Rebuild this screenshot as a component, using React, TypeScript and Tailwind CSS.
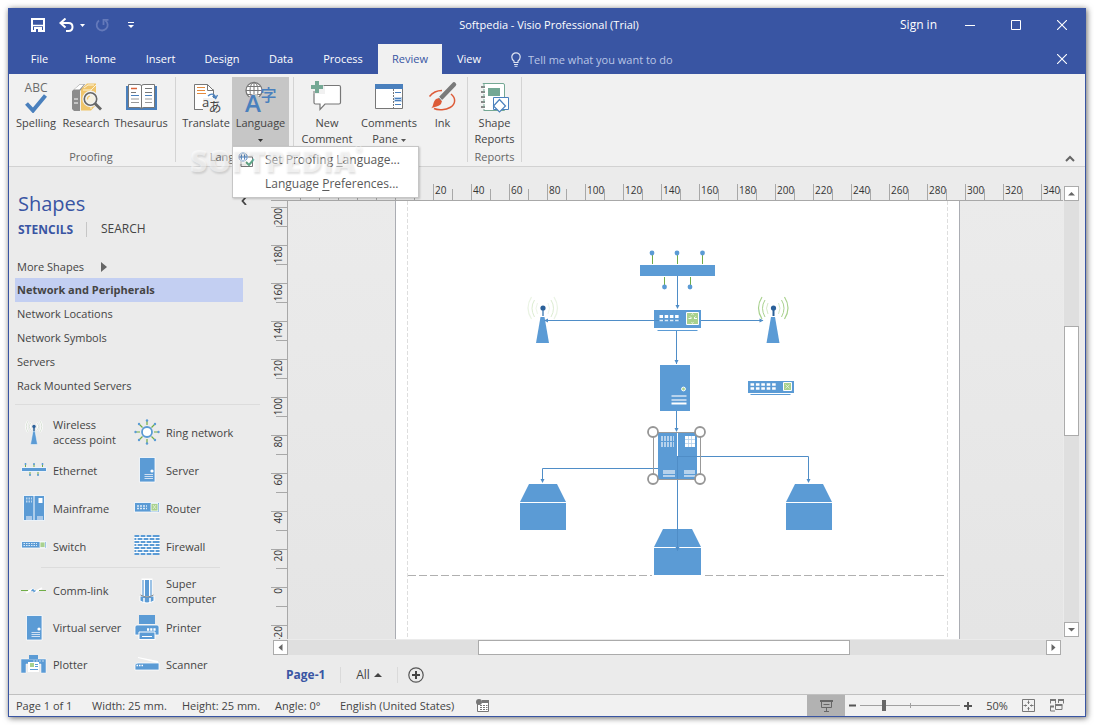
import type { ReactNode } from "react";

const BLUE = "#5b9bd5";
const GREEN = "#a9d18e";

type ArtProps = { view: string; w: number; h: number; children: ReactNode; className?: string };

function Art({ view, w, h, children, className = "" }: ArtProps) {
  return (
    <svg viewBox={view} width={w} height={h} fill="none" aria-hidden="true" className={`shrink-0 ${className}`}>
      {children}
    </svg>
  );
}

/* ---------- Title bar and tabs ---------- */

function TitleBar() {
  return (
    <div className="relative flex h-[36px] items-center pb-[2px] text-white">
      <div className="flex flex-1 items-center pl-[23px]">
        <button aria-label="Save" className="mr-[14px]">
          <Art view="0 0 14 14" w={14} h={14}>
            <path d="M1 1H13V13H1Z" stroke="#fff" strokeWidth="2" />
            <path d="M1 7.500H13" stroke="#fff" strokeWidth="1.500" />
            <path d="M3 9H11V14H3Z" fill="#fff" />
            <path d="M5 11H7V14H5Z" fill="#3955a3" />
          </Art>
        </button>
        <button aria-label="Undo">
          <Art view="0 0 15 14" w={15} h={14}>
            <path d="M2 5H9.500C12 5 13.500 6.800 13.500 9S12 13 9.500 13H7" stroke="#fff" strokeWidth="2" />
            <path d="M6.500 0.500L1.500 5L6.500 9.500" stroke="#fff" strokeWidth="2" />
          </Art>
        </button>
        <button aria-label="Undo history" className="ml-[6px] mr-[10px]">
          <Art view="0 0 5 3" w={5} h={3}><path d="M0 0H5L2.500 3Z" fill="#fff" /></Art>
        </button>
        <button aria-label="Repeat" disabled>
          <Art view="0 0 14 14" w={14} h={14}>
            <path d="M4 2.500A5.500 5.500 0 1 0 10.500 2.600M8.500 7V1.800H13.500" stroke="#6479ba" strokeWidth="1.800" />
          </Art>
        </button>
        <button aria-label="Customize Quick Access Toolbar" className="ml-[19px]">
          <Art view="0 0 6 6" w={6} h={6}>
            <path d="M0 .5H6" stroke="#fff" />
            <path d="M0 3H6L3 6Z" fill="#fff" />
          </Art>
        </button>
      </div>
      <h1>Softpedia - Visio Professional (Trial)</h1>
      <div className="flex flex-1 items-center justify-end pr-[19px]">
        <button className="mr-[28px] text-[12px]">Sign in</button>
        <button aria-label="Minimize" className="mr-[36px]"><Art view="0 0 10 10" w={10} h={10}><path d="M0 5.500H10" stroke="#fff" /></Art></button>
        <button aria-label="Maximize" className="mr-[36px]"><Art view="0 0 10 10" w={10} h={10}><path d="M.5 .5H9.500V9.500H.5Z" stroke="#fff" /></Art></button>
        <button aria-label="Close"><CloseGlyph /></button>
      </div>
    </div>
  );
}

function CloseGlyph() {
  return <Art view="0 0 10 10" w={10} h={10}><path d="M0 0L10 10M10 0L0 10" stroke="#fff" strokeWidth="1.100" /></Art>;
}

function Tabs() {
  const tab = "flex h-full items-center justify-center text-white";
  return (
    <nav className="flex h-[30px] items-center pl-px">
      <button className={`${tab} w-[61px]`}>File</button>
      <button className={`${tab} w-[61px]`}>Home</button>
      <button className={`${tab} w-[59px]`}>Insert</button>
      <button className={`${tab} w-[64px]`}>Design</button>
      <button className={`${tab} w-[54px]`}>Data</button>
      <button className={`${tab} w-[70px]`}>Process</button>
      <button className="flex h-full w-[64px] items-center justify-center bg-[#f1f1f1] text-[#3955a3]">Review</button>
      <button className={`${tab} w-[54px]`}>View</button>
      <label className="ml-[15px] flex h-full flex-1 items-center gap-[7px]">
        <Art view="0 0 10 15" w={10} h={15}>
          <path d="M3 10.500V9C1.500 8 .8 6.600 .8 5A4.200 4.200 0 0 1 9.200 5C9.200 6.600 8.500 8 7 9V10.500Z" stroke="#dfe4f2" strokeWidth="1.200" />
          <path d="M3 12.500H7M3.500 14.300H6.500" stroke="#dfe4f2" />
        </Art>
        <input aria-label="Tell me" className="h-[20px] w-[200px] bg-transparent outline-none placeholder:text-[#b9c5e6]" placeholder="Tell me what you want to do" />
      </label>
      <button aria-label="Close document" className="mr-[19px]"><CloseGlyph /></button>
    </nav>
  );
}

/* ---------- Ribbon ---------- */

function SpellingIcon() {
  return (
    <span className="flex h-[32px] flex-col items-center">
      <span className="h-[13px] text-[12px] leading-[13px] font-medium text-[#6b6b6b]">ABC</span>
      <Art view="0 0 22 19" w={22} h={19}><path d="M1.500 9.500L8 16.500L20.500 1.500" stroke="#4a80bd" strokeWidth="4" /></Art>
    </span>
  );
}

function ResearchIcon() {
  return (
    <Art view="70 80 32 32" w={32} h={32}>
      <path d="M81 88L87 82.500H96V104L91 109.500H81Z" fill="#f0c56b" />
      <path d="M83 89H91V108M91 89L96 84M84 87L88 84H94" stroke="#fdf3d8" />
      <path d="M72 90L80 83H85L80 90V110H74L72 108Z" fill="#8c8c8c" />
      <path d="M74 88.500L80 83.500H84L79.500 88.500Z" fill="#fff" />
      <path d="M74 98H78M74 102H78" stroke="#fff" />
      <circle cx="90.500" cy="98" r="6.200" fill="#f4f0e2" stroke="#f1f1f1" strokeWidth="4" />
      <circle cx="90.500" cy="98" r="6.200" stroke="#666" strokeWidth="1.600" />
      <path d="M95 102.500L101 108.500" stroke="#666" strokeWidth="2.800" />
      <path d="M87.500 98.500A3.200 3.200 0 0 1 90 95" stroke="#f0c56b" strokeWidth="1.200" />
    </Art>
  );
}

function ThesaurusIcon() {
  return (
    <Art view="124 80 33 32" w={33} h={32}>
      <path d="M125 85H156V109H125Z" fill="#4a80bd" />
      <path d="M127.500 83.500H138Q140.500 83.500 140.500 85Q140.500 83.500 143 83.500H153.500V106.500H143Q140.500 106.500 140.500 108Q140.500 106.500 138 106.500H127.500Z" fill="#fff" stroke="#777" />
      <path d="M140.500 85V107" stroke="#777" />
      <path d="M130 87.500H136" stroke="#d9633b" strokeWidth="1.500" />
      <path d="M130 91.500H135M144 87.500H151M144 91.500H151" stroke="#777" />
      <path d="M130 94.500H138M144 94.500H151" stroke="#4a80bd" />
      <path d="M130 98H138M130 101.500H138M144 98H151M144 101.500H151" stroke="#999" />
    </Art>
  );
}

function TranslateIcon() {
  return (
    <Art view="190 80 32 32" w={32} h={32} className="overflow-visible">
      <path d="M194.500 83.500H207.500L213.500 89.500V108.500H194.500Z" fill="#fff" stroke="#777" />
      <path d="M207.500 83.500V89.500H213.500" stroke="#777" />
      <path d="M197 86.500H205M197 89.500H205M197 92.500H206" stroke="#e58a3c" strokeWidth="1.200" />
      <path d="M203 97H222V112H203Z" fill="#f1f1f1" />
      <path d="M213.500 88.500V93M194.500 108.500H202" stroke="#777" />
      <path d="M208 95C211 92 214.500 92.500 215.500 96.500M212.500 95L215.700 97.500L217.500 94" stroke="#4a80bd" strokeWidth="1.300" />
      <text x="202" y="106" fontSize="13" fontFamily="Open Sans" fill="#444">a</text>
      <text x="208.500" y="110" fontSize="13" fontFamily="Noto Sans CJK JP" fill="#444">あ</text>
    </Art>
  );
}

function LanguageIcon() {
  return (
    <Art view="244 80 32 32" w={32} h={32} className="overflow-visible">
      <circle cx="253" cy="89.500" r="8" fill="#fff" stroke="#777" strokeWidth="1.300" />
      <ellipse cx="253" cy="89.500" rx="4" ry="8" stroke="#777" />
      <path d="M253 81.500V97.500M245 89.500H261M246.500 85.500H259.500M246.500 93.500H259.500" stroke="#777" />
      <path d="M246 99L251 93H256L260 99Z" fill="#c6c6c6" />
      <text x="244" y="111" fontSize="24" fontWeight="600" fontFamily="Open Sans" fill="#4a80bd">A</text>
      <text x="259.500" y="99.500" fontSize="16" fontFamily="Noto Sans CJK JP" fontWeight="500" fill="#4a80bd">字</text>
    </Art>
  );
}

function NewCommentIcon() {
  return (
    <Art view="311 80 32 32" w={32} h={32}>
      <path d="M315.500 84.500H339Q340.500 84.500 340.500 86V101.500Q340.500 103 339 103H325L320 108.500V103H315.500Q314 103 314 101.500V86Q314 84.500 315.500 84.500Z" fill="#fff" stroke="#777" strokeWidth="1.200" />
      <path d="M310 79H325V93H310Z" fill="#f1f1f1" />
      <path d="M314 93V90M323.500 84.500H327" stroke="#777" />
      <path d="M315 80H319V84H323V88H319V92H315V88H311V84H315Z" fill="#74a894" />
    </Art>
  );
}

function CommentsPaneIcon() {
  return (
    <Art view="373 80 32 32" w={32} h={32}>
      <path d="M375.500 83.500H402.500V107.500H375.500Z" fill="#fff" stroke="#777" />
      <path d="M375 83H403V88H375Z" fill="#4a80bd" />
      <path d="M393.500 88V107" stroke="#777" strokeDasharray="2 1" />
      <path d="M394 96H402V101H394Z" fill="#bcd3ec" />
      <path d="M395 91.500H401M395 97.500H401M395 99.500H401M395 103.500H401" stroke="#4a80bd" />
    </Art>
  );
}

function InkIcon() {
  return (
    <Art view="427 80 32 32" w={32} h={32}>
      <path d="M429.500 95.500C433 91 438 89.500 442 89.500M451 93C456 97 456 103 450 106.500C446 109 438 109.500 434 107.500" stroke="#dd5b38" strokeWidth="1.500" />
      <path d="M431 107.500C434 105 432.500 101 436 98L439 97L442 100L441 103C438 106 434 105.500 431 107.500Z" fill="#dd5b38" />
      <path d="M441 97L454 83.500" stroke="#7a7a7a" strokeWidth="4.500" strokeLinecap="round" />
      <path d="M437.500 94.500L443 100.500" stroke="#f1f1f1" />
    </Art>
  );
}

function ShapeReportsIcon() {
  return (
    <Art view="478 80 32 32" w={32} h={32}>
      <path d="M482 82.500H502Q503.500 82.500 503.500 84V109.500H482Z" fill="#fff" stroke="#74a894" />
      <path d="M482 83V110" stroke="#f1f1f1" strokeWidth="2" />
      <path d="M480 86H484M480 91H484M480 96H484M480 101H484M480 106H484" stroke="#888" strokeWidth="2" />
      <path d="M483 83V110" stroke="#74a894" strokeDasharray="3 2" />
      <path d="M487 87H499V95H487Z" fill="#74a894" />
      <path d="M492.500 96.500H507.500V108.500H492.500Z" fill="#fff" stroke="#4a80bd" />
      <path d="M498.500 98.500L504.500 105L498.500 111L492.500 105Z" fill="#fff" stroke="#4a80bd" strokeWidth="1.200" />
    </Art>
  );
}

type RibbonButtonProps = { icon: ReactNode; label: ReactNode; className: string };

function RibbonButton({ icon, label, className }: RibbonButtonProps) {
  return (
    <button className={`flex h-[69px] flex-col items-center pt-[4px] leading-[16px] whitespace-nowrap ${className}`}>
      {icon}
      <span className="mt-[2px] text-center">{label}</span>
    </button>
  );
}

function RibbonGroup({ title, children, className = "" }: { title: string; children: ReactNode; className?: string }) {
  return (
    <section className={`flex h-[85px] flex-col border-r border-[#d4d4d4] ${className}`}>
      <div className="flex">{children}</div>
      <h2 className="mt-[3px] text-center text-[#666] leading-[16px]">{title}</h2>
    </section>
  );
}

function Caret({ color = "#555" }: { color?: string }) {
  return <Art view="0 0 5 3" w={5} h={3} className="inline-block align-middle"><path d="M0 0H5L2.500 3Z" fill={color} /></Art>;
}

function LanguageMenu() {
  return (
    <div role="menu" className="absolute top-[69px] left-0 z-10 flex w-[187px] flex-col border border-[#c6c6c6] bg-white py-[1px] text-[12px] text-[#5a5a5a] shadow-[1px_1px_2px_rgba(0,0,0,0.2)]">
      <button role="menuitem" className="flex h-[24px] items-center pl-[5px] whitespace-nowrap">
        <Art view="0 0 17 16" w={17} h={16}>
          <path d="M3 9V14.500H14.500V5H10" fill="#fff" stroke="#777" />
          <circle cx="5" cy="5" r="4.200" fill="#fff" stroke="#4a80bd" />
          <ellipse cx="5" cy="5" rx="1.800" ry="4.200" stroke="#4a80bd" />
          <path d="M1 5H9" stroke="#4a80bd" />
          <path d="M8 10L11 13L16 7" stroke="#5fa587" strokeWidth="2" />
        </Art>
        <span className="pl-[10px]">Set Proofing <u className="underline-offset-2">L</u>anguage...</span>
      </button>
      <button role="menuitem" className="flex h-[24px] items-center pl-[32px] whitespace-nowrap">
        <span>Language <u className="underline-offset-2">P</u>references...</span>
      </button>
      <span className="pointer-events-none absolute top-[-4px] left-[-43px] flex text-[30px] leading-[36px] font-extrabold text-white/50 [text-shadow:1px_2px_2px_rgba(0,0,0,0.12)]">
        SOFTPEDIA<span className="text-[9px] leading-[12px]">®</span>
      </span>
    </div>
  );
}

function Ribbon() {
  return (
    <div className="flex h-[93px] border-b border-[#d2d2d2] bg-[#f1f1f1] pt-[3px] text-[#444]">
      <RibbonGroup title="Proofing" className="pl-[2px] pr-[4px]">
        <RibbonButton icon={<SpellingIcon />} label="Spelling" className="w-[50px]" />
        <RibbonButton icon={<ResearchIcon />} label="Research" className="w-[50px]" />
        <RibbonButton icon={<ThesaurusIcon />} label="Thesaurus" className="w-[60px]" />
      </RibbonGroup>
      <RibbonGroup title="Language" className="pl-[4px] pr-[4px]">
        <RibbonButton icon={<TranslateIcon />} label="Translate" className="w-[52px]" />
        <div className="relative">
          <RibbonButton icon={<LanguageIcon />} label={<>Language<br /><Caret color="#333" /></>} className="w-[57px] bg-[#c6c6c6]" />
          <LanguageMenu />
        </div>
      </RibbonGroup>
      <RibbonGroup title="Comments" className="pl-[2px] pr-[2px]">
        <RibbonButton icon={<NewCommentIcon />} label={<>New<br />Comment</>} className="w-[62px]" />
        <RibbonButton icon={<CommentsPaneIcon />} label={<>Comments<br />Pane <Caret /></>} className="w-[62px]" />
        <RibbonButton icon={<InkIcon />} label="Ink" className="w-[45px]" />
      </RibbonGroup>
      <RibbonGroup title="Reports">
        <RibbonButton icon={<ShapeReportsIcon />} label={<>Shape<br />Reports</>} className="w-[53px]" />
      </RibbonGroup>
      <button aria-label="Collapse the Ribbon" className="mt-auto mb-[4px] ml-auto mr-[10px]">
        <Art view="0 0 10 7" w={10} h={7}><path d="M1 6L5 2L9 6" stroke="#666" strokeWidth="2" /></Art>
      </button>
    </div>
  );
}

/* ---------- Shapes pane ---------- */

const stencils = ["Network and Peripherals", "Network Locations", "Network Symbols", "Servers", "Rack Mounted Servers"];

const shapeArt: Record<string, ReactNode> = {
  wireless: (
    <>
      <path d="M12 12H14L16.500 25.500H9.500Z" fill={BLUE} stroke="#fff" strokeWidth=".5" />
      <path d="M13 9V12" stroke="#2a6099" strokeWidth="1.500" />
      <path d="M10 4Q7.500 7.500 10 11M16 4Q18.500 7.500 16 11M7 2Q3.500 7.500 7 13M19 2Q22.500 7.500 19 13" stroke="#fff" strokeWidth="2.200" />
      <path d="M9.500 4Q7 7.500 9.500 11M16.500 4Q19 7.500 16.500 11M7 2Q3.500 7.500 7 13M19 2Q22.500 7.500 19 13" stroke="#c9d6c4" strokeWidth=".7" />
      <circle cx="13" cy="7.500" r="1.700" fill="#2a6099" />
    </>
  ),
  ring: (
    <>
      <path d="M13 2V6M13 20V24M2 13H6M20 13H24M5 5L8.500 8.500M17.500 17.500L21 21M21 5L17.500 8.500M5 21L8.500 17.500" stroke="#70ad47" strokeWidth="1.200" />
      <circle cx="13" cy="13" r="5" fill="#fff" stroke={BLUE} strokeWidth="1.800" />
      {[[13, 1.5], [13, 24.5], [1.5, 13], [24.5, 13], [5, 5], [21, 21], [21, 5], [5, 21]].map(([x, y]) => <circle key={`${x}-${y}`} cx={x} cy={y} r="1.200" fill={BLUE} />)}
    </>
  ),
  ethernet: (
    <>
      <path d="M.5 10.500H25.500V14.500H.5Z" fill={BLUE} stroke="#fff" strokeWidth=".8" />
      <path d="M4.500 7V10M13 7V10M21.500 7V10M9 15V18M17 15V18" stroke="#70ad47" />
      <path d="M4.500 6V8M13 6V8M21.500 6V8M9 17V19M17 17V19" stroke={BLUE} strokeWidth="1.500" />
    </>
  ),
  server: (
    <>
      <path d="M5.500 .5H21V25H5.500Z" fill={BLUE} stroke="#fff" strokeWidth=".8" />
      <circle cx="18" cy="14" r="1.600" fill="#fff" />
      <path d="M10.500 17.500H19M10.500 19.500H19M10.500 21.500H19" stroke="#cfe0f3" />
    </>
  ),
  mainframe: (
    <>
      <path d="M2.500 .5H23.500V25.500H2.500Z" fill={BLUE} stroke="#fff" strokeWidth=".8" />
      <path d="M13 0V25" stroke="#fff" />
      <path d="M5 3.500H11M5 6.500H11" stroke="#bcd6ee" strokeWidth="2" strokeDasharray="1.500 1" />
      <path d="M17.500 3H21.500V8H17.500Z" fill="#fff" />
      <path d="M5 21H11V25H5ZM16 21H22V25H16Z" fill="#a9c9e9" />
    </>
  ),
  router: (
    <>
      <path d="M.5 7.500H25.500V17H.5Z" fill={BLUE} stroke="#fff" strokeWidth=".8" />
      <path d="M3 11H13M3 13.500H13" stroke="#dceaf7" strokeWidth="1.500" strokeDasharray="2 1" />
      <path d="M17 8.500H24V16H17Z" fill={GREEN} stroke="#fff" strokeWidth=".8" />
      <path d="M19 10L22 14M22 10L19 14" stroke="#e6f3dd" strokeWidth=".8" />
    </>
  ),
  switch: (
    <>
      <path d="M.5 8.500H25.500V15H.5Z" fill={BLUE} stroke="#fff" strokeWidth=".8" />
      <path d="M2.500 10.500H16M2.500 12.500H16" stroke="#dceaf7" strokeDasharray="1.500 1" />
      <path d="M19 9H24V14.500H19Z" fill={GREEN} stroke="#fff" strokeWidth=".8" />
    </>
  ),
  firewall: (
    <>
      <path d="M.5 2H25.500V22H.5Z" fill={BLUE} />
      <path d="M0 4.500H26M0 7.500H26M0 10.500H26M0 13.500H26M0 16.500H26M0 19.500H26" stroke="#fff" />
      <path d="M6 2V4M12 2V4M18 2V4M3 5V7M9 5V7M15 5V7M21 5V7M6 8V10M12 8V10M18 8V10M3 11V13M9 11V13M15 11V13M21 11V13M6 14V16M12 14V16M18 14V16M3 17V19M9 17V19M15 17V19M21 17V19M6 20V22M12 20V22M18 20V22" stroke="#fff" strokeWidth="1.200" />
    </>
  ),
  comm: (
    <>
      <path d="M5 15L12 11L14 14L21 10" stroke="#fff" strokeWidth="2" />
      <path d="M0 12.500H7M18 12.500H25" stroke="#70ad47" />
      <path d="M10.500 13L12 11.500L13 13.500L14.500 12.500" stroke={BLUE} strokeWidth="1.200" />
    </>
  ),
  super: (
    <>
      <path d="M7.500 .5H18.500V19H7.500Z" fill="#fff" />
      <path d="M6 18H20V23Q13 27 6 23Z" fill={BLUE} stroke="#fff" />
      <path d="M9 2V18M17 2V18" stroke={BLUE} strokeWidth="1.200" />
      <path d="M11 2H15V18H11Z" fill={BLUE} />
      <path d="M6.500 17Q13 21 19.500 17" stroke="#888" />
      <path d="M10 20V25M16 20V25" stroke="#fff" strokeWidth="1.500" />
    </>
  ),
  printer: (
    <>
      <path d="M5 0H21V9H5Z" fill={BLUE} />
      <path d="M3 10H23Q25 10 25 12V20H1V12Q1 10 3 10Z" fill={BLUE} stroke="#fff" strokeWidth=".8" />
      <path d="M5 17H21V24.500H5Z" fill={BLUE} stroke="#fff" />
      <path d="M13 14.500H22" stroke="#fff" strokeWidth="2.400" strokeDasharray="2.200 1" />
      <path d="M8 21.500H18" stroke="#fff" />
    </>
  ),
  plotter: (
    <>
      <path d="M0 7H25V21H20V12H5V21H0Z" fill={BLUE} stroke="#fff" strokeWidth=".5" />
      <path d="M8 3H17V7H8Z" fill={BLUE} />
      <path d="M7 10H18V20H7Z" fill="#fff" />
      <path d="M9 11H13V15H9Z" fill={GREEN} />
      <path d="M14 12.500H17M14 14.500H17M9 17.500H17" stroke={BLUE} />
      <path d="M12 9H23" stroke="#bcd6ee" strokeDasharray="2 1" />
    </>
  ),
  scanner: (
    <>
      <path d="M4 5L24 9V11L4 6Z" fill="#fff" />
      <path d="M1 13Q1 11 4 11H25V18H1Z" fill={BLUE} stroke="#fff" strokeWidth=".8" />
      <path d="M2.500 13.500H9" stroke="#fff" strokeWidth="1.500" strokeDasharray="1.500 1" />
    </>
  ),
};

function ShapeItem({ art, label }: { art: string; label: ReactNode }) {
  return (
    <button className="flex items-center gap-[6px] text-left leading-[15px] whitespace-nowrap">
      <Art view="0 0 26 26" w={26} h={26}>{shapeArt[art]}</Art>
      <span>{label}</span>
    </button>
  );
}

function ShapesPane() {
  return (
    <aside className="relative w-[262px] shrink-0 pt-[24px] text-[#444]">
      <h2 className="pl-[9px] text-[20px] leading-[26px] text-[#3955a3]">Shapes</h2>
      <button aria-label="Minimize the Shapes window" className="absolute top-[30px] right-[24px]">
        <Art view="0 0 6 8" w={6} h={8}><path d="M5 0L1.500 4L5 8" stroke="#444" strokeWidth="1.800" /></Art>
      </button>
      <div className="flex h-[24px] items-center pl-[9px] text-[12px]">
        <button className="w-[69px] border-r border-[#c6c6c6] text-left leading-[15px] font-bold text-[#3955a3]">STENCILS</button>
        <button className="pl-[14px]">SEARCH</button>
      </div>
      <ul className="mt-[14px] leading-[24px]">
        <li className="h-[23px]">
          <button className="flex items-center gap-[17px] pl-[8px]">
            More Shapes
            <Art view="0 0 6 10" w={6} h={10}><path d="M0 0L6 5L0 10Z" fill="#666" /></Art>
          </button>
        </li>
        {stencils.map((name, i) => (
          <li key={name} className={i === 0 ? "ml-[6px] w-[228px] bg-[#c3cff2] pl-[2px] font-bold" : "pl-[8px]"}>
            <button>{name}</button>
          </li>
        ))}
      </ul>
      <hr className="mt-[6px] ml-[6px] w-[245px] border-[#dcdcdc]" />
      <div className="mt-[8px] ml-[12px] grid grid-cols-[113px_1fr] auto-rows-[38px]">
        <ShapeItem art="wireless" label={<>Wireless<br />access point</>} />
        <ShapeItem art="ring" label="Ring network" />
        <ShapeItem art="ethernet" label="Ethernet" />
        <ShapeItem art="server" label="Server" />
        <ShapeItem art="mainframe" label="Mainframe" />
        <ShapeItem art="router" label="Router" />
        <ShapeItem art="switch" label="Switch" />
        <ShapeItem art="firewall" label="Firewall" />
      </div>
      <hr className="mt-[2px] ml-[32px] w-[179px] border-[#dcdcdc]" />
      <div className="mt-[4px] ml-[12px] grid grid-cols-[113px_1fr] auto-rows-[37px]">
        <ShapeItem art="comm" label="Comm-link" />
        <ShapeItem art="super" label={<>Super<br />computer</>} />
        <ShapeItem art="server" label="Virtual server" />
        <ShapeItem art="printer" label="Printer" />
        <ShapeItem art="plotter" label="Plotter" />
        <ShapeItem art="scanner" label="Scanner" />
      </div>
    </aside>
  );
}

/* ---------- Rulers ---------- */

function TopRuler() {
  const halves = Array.from({ length: 60 }, (_, i) => i);
  return (
    <div className="flex h-[34px] items-end overflow-hidden border-b border-[#a8a8a8] pl-[29px] text-[10px] leading-[13px] text-[#333]">
      {halves.map((i) =>
        i % 2 === 0 ? (
          <span key={i} className="h-[11px] w-[19px] shrink-0 border-l border-[#a8a8a8]" />
        ) : (
          <span key={i} className="h-[16px] w-[19px] shrink-0 border-l border-[#a8a8a8] pl-[1px] whitespace-nowrap">
            {i > 5 && i < 41 ? (i - 5) * 10 : null}
          </span>
        ),
      )}
    </div>
  );
}

function SideRuler() {
  const halves = Array.from({ length: 23 }, (_, i) => i);
  return (
    <div className="flex w-[17px] shrink-0 flex-col items-end overflow-hidden border-r border-[#a8a8a8] pt-[6px] text-[10px] leading-[13px] text-[#333]">
      {halves.map((i) =>
        i % 2 === 1 ? (
          <span key={i} className="h-[19px] w-[11px] shrink-0 border-t border-[#a8a8a8]" />
        ) : (
          <span key={i} className="flex h-[19px] w-[16px] shrink-0 items-start border-t border-[#a8a8a8]">
            <span className="rotate-180 py-[1px] [writing-mode:vertical-rl]">{200 - i * 10}</span>
          </span>
        ),
      )}
    </div>
  );
}

/* ---------- Diagram ---------- */

function Tower({ x, strong }: { x: number; strong?: boolean }) {
  return (
    <g transform={`translate(${x} 0)`}>
      <path d="M-2 317H2L6.500 343H-6.500Z" fill={BLUE} />
      <path d="M.5 309V316" stroke={strong ? "#2a6099" : "#7ea6cc"} strokeWidth="2" />
      <circle cx=".5" cy="308" r="2.600" fill="#2a6099" />
      <g stroke={GREEN} opacity={strong ? 1 : 0.4}>
        <path d="M-5 303Q-8 308 -5 314M5.500 303Q8.500 308 5.500 314" opacity=".5" />
        <path d="M-8 300Q-13 308 -8 317M8.500 300Q13.500 308 8.500 317" />
        <path d="M-11 297Q-18 308 -11 319M11.500 297Q18.500 308 11.500 319" strokeWidth="1.200" opacity={strong ? 1 : 0.6} />
      </g>
    </g>
  );
}

function Cabinet({ x, y, w }: { x: number; y: number; w: number }) {
  return (
    <g fill={BLUE} transform={`translate(${x} ${y})`}>
      <path d={`M9 0H${w - 9}L${w} 18H0Z`} />
      <path d={`M0 19H${w}V46H0Z`} />
    </g>
  );
}

function Diagram() {
  const line = "#4f8dc7";
  const arrows = [[677.5, 309], [676.5, 364], [676.5, 432], [542.5, 483], [808.5, 483]];
  return (
    <svg viewBox="396 201 563 438" width="563" height="438" fill="none" role="img" aria-label="Network diagram">
      <path d="M407.500 201V639M947.500 201V639" stroke="#dedede" strokeDasharray="4 2" />
      <path d="M408 575.500H944" stroke="#b0b0b0" strokeDasharray="8 3" />
      <path d="M640 265H715V276H640Z" fill={BLUE} />
      <path d="M652.500 255V264M677.500 255V264M702.500 255V264M664.500 277V286M690.500 277V286" stroke="#70ad47" />
      {[[652, 253], [677, 253], [702.5, 253], [664.5, 287], [690, 287]].map(([x, y]) => (
        <circle key={`${x}-${y}`} cx={x} cy={y} r="2.400" fill={BLUE} />
      ))}
      <Tower x={542.5} />
      <Tower x={773} strong />
      <path d="M545 320.500H763M677.500 276V308M676.500 331V364" stroke={line} />
      <path d="M763.500 320.500L759.500 318.500V322.500ZM544 320.500L548 318.500V322.500Z" fill={line} />
      <path d="M654 310H701V328H654Z" fill={BLUE} />
      <path d="M654 320.500H680" stroke={line} />
      <path d="M657.500 330.500H697.500" stroke={BLUE} />
      <path d="M659.500 316.500H679.500" stroke="#fff" strokeWidth="3" strokeDasharray="3.500 1.700" />
      <path d="M659.500 320.500H679.500" stroke="#dceaf7" strokeWidth="1.600" strokeDasharray="3.500 1.700" />
      <path d="M686.500 312.500H698.500V324.500H686.500Z" fill={GREEN} stroke="#fff" />
      <path d="M688.500 318.500H691.500M694 318.500H697M691.500 314.500L692.500 313.800L693.500 314.500M691.500 322.500L692.500 323.200L693.500 322.500M690 316.500L691.500 318M695.500 316.500L694 318" stroke="#fff" strokeWidth=".9" />

      <path d="M660 365H690V411H660Z" fill={BLUE} />
      <circle cx="683.500" cy="389" r="1.900" fill={GREEN} stroke="#fff" />
      <path d="M671.500 396H686.500M671.500 400H686.500" stroke="#b7d2ec" strokeWidth="1.800" />
      <path d="M671.500 403.500H686.500" stroke="#fff" strokeWidth="2" />

      <path d="M748 381H794V393H748Z" fill={BLUE} />
      <path d="M750.500 394.500H790.500" stroke={BLUE} />
      <path d="M750.500 384.500H776M750.500 388.500H776" stroke="#fff" strokeWidth="2.300" strokeDasharray="3.600 1.800" />
      <path d="M783.500 382.500H791.500V390.500H783.500Z" fill={GREEN} stroke="#fff" />
      <path d="M785.500 384.500L789.500 388.500M789.500 384.500L785.500 388.500" stroke="#fff" strokeWidth=".7" opacity=".8" />

      <Cabinet x={520} y={484} w={46} />
      <Cabinet x={786} y={484} w={46} />
      <path d="M652 572H704V578H652Z" fill="#fff" />
      <Cabinet x={654} y={529} w={47} />

      <path d="M658 432H697V479H658Z" fill={BLUE} />
      <path d="M677.500 432V456" stroke="#fff" />
      <path d="M661 438.500H674M661 444.500H674" stroke="#b7d2ec" strokeWidth="5" strokeDasharray="2 1" />
      <path d="M685 436H695V447H685Z" fill="#fff" />
      <path d="M688.500 436V447M691.500 436V447M685 439.500H695M685 443.500H695" stroke="#b5d0eb" strokeWidth=".8" />
      <path d="M663 472H675M684 472H695" stroke="#b7d2ec" strokeWidth="4" />
      <path d="M663 476H675M684 476H695" stroke="#b7d2ec" strokeWidth="1.800" />
      <path d="M676.500 411V430M677.500 456V551M677.500 456.500H808.500V482M658 468.500H542.500V482" stroke={line} />
      {arrows.map(([x, y]) => <path key={`${x}-${y}`} d={`M${x - 2} ${y - 4}H${x + 2}L${x} ${y}Z`} fill={line} />)}
      <path d="M675.500 547H679.500L677.500 551Z" fill={line} />

      <path d="M653.500 432.500H700.500V479.500H653.500Z" stroke="#999" />
      {[[653, 432], [700, 432], [653, 479], [700, 479]].map(([x, y]) => (
        <circle key={`${x}-${y}`} cx={x} cy={y} r="5" fill="#fff" stroke="#969696" strokeWidth="1.800" />
      ))}
    </svg>
  );
}

/* ---------- Drawing area ---------- */

function ScrollButton({ label, d }: { label: string; d: string }) {
  return (
    <button aria-label={label} className="flex size-[15px] shrink-0 items-center justify-center border border-[#ababab] bg-white">
      <Art view="0 0 7 7" w={7} h={7}><path d={d} fill="#666" /></Art>
    </button>
  );
}

function DrawingArea() {
  return (
    <main className="flex min-w-0 flex-1 flex-col">
      <div className="flex min-h-0 flex-1">
        <div className="flex min-w-0 flex-1 flex-col">
          <TopRuler />
          <div className="flex min-h-0 flex-1 overflow-hidden">
            <SideRuler />
            <div className="flex flex-1 overflow-hidden bg-linear-to-b from-[#ebebeb] to-[#e5e5e5] pl-[107px]">
              <div className="shrink-0 border-x border-[#abadb3] bg-white"><Diagram /></div>
            </div>
          </div>
        </div>
        <div className="mt-[19px] mr-[6px] mb-[2px] ml-[1px] flex flex-col bg-[#dfdfdf]">
          <ScrollButton label="Scroll up" d="M0 5.500L3.500 2L7 5.500Z" />
          <div className="mt-[125px] h-[110px] border border-[#ababab] bg-white" />
          <div className="flex-1" />
          <ScrollButton label="Scroll down" d="M0 2L3.500 5.500L7 2Z" />
        </div>
      </div>
      <div className="mt-[1px] mr-[24px] ml-[2px] flex h-[15px] bg-[#dfdfdf]">
        <ScrollButton label="Scroll left" d="M5.500 0L1.500 3.500L5.500 7Z" />
        <div className="ml-[190px] w-[372px] border border-[#ababab] bg-white" />
        <div className="flex-1" />
        <ScrollButton label="Scroll right" d="M1.500 0L5.500 3.500L1.500 7Z" />
      </div>
      <div className="flex h-[39px] items-center pl-[15px] text-[12px] text-[#444]">
        <button className="w-[55px] border-r border-[#dadada] text-left leading-[16px] font-bold text-[#3955a3]">Page-1</button>
        <button className="flex w-[57px] items-center justify-center gap-[4px] border-r border-[#dadada] leading-[16px]">
          All <Art view="0 0 8 4" w={8} h={4}><path d="M0 4L4 0L8 4Z" fill="#444" /></Art>
        </button>
        <button aria-label="Insert page" className="ml-[10px]">
          <Art view="0 0 16 16" w={16} h={16}>
            <circle cx="8" cy="8" r="7.200" stroke="#555" strokeWidth="1.200" />
            <path d="M8 4V12M4 8H12" stroke="#444" strokeWidth="2" />
          </Art>
        </button>
      </div>
    </main>
  );
}

/* ---------- Status bar ---------- */

function StatusBar() {
  return (
    <footer className="flex h-[22px] items-center border-t border-[#c0c0c0] bg-[#f1f1f1] pl-[7px] whitespace-nowrap text-[#444]">
      <span className="w-[76px]">Page 1 of 1</span>
      <span className="w-[90px]">Width: 25 mm.</span>
      <span className="w-[93px]">Height: 25 mm.</span>
      <span className="w-[65px]">Angle: 0°</span>
      <button className="w-[136px] text-left">English (United States)</button>
      <button aria-label="Macros">
        <Art view="0 0 14 13" w={14} h={13}>
          <path d="M1.500 5V12.500H12.500V2.500H6" fill="#fff" stroke="#777" />
          <path d="M6 1H13V4H6Z" fill="#777" />
          <circle cx="3" cy="3" r="3" fill="#777" />
          <path d="M4 6.500H11.500M4 8.500H11.500M4 10.500H11.500" stroke="#777" strokeDasharray="2 1" />
        </Art>
      </button>
      <div className="ml-auto flex h-full items-center">
        <button aria-label="Presentation mode" className="flex h-full w-[38px] items-center justify-center bg-[#b2b2b2]">
          <Art view="0 0 13 12" w={13} h={12}>
            <path d="M0 1H13" stroke="#666" strokeWidth="2" />
            <path d="M1.500 2V7.500H11.500V2M3.500 4.500H9.500M6.500 8V11.500M4 11.500H9" stroke="#666" />
          </Art>
        </button>
        <button aria-label="Zoom out" className="mx-[4px]"><Art view="0 0 7 7" w={7} h={7}><path d="M0 3.500H7" stroke="#555" strokeWidth="2" /></Art></button>
        <div className="relative flex items-center">
          <span className="absolute left-[50px] h-[5px] w-px bg-[#a0a0a0]" />
          <input
            type="range"
            aria-label="Zoom"
            defaultValue={23}
            className="relative h-[11px] w-[100px] appearance-none bg-[linear-gradient(#a0a0a0,#a0a0a0)] bg-[length:100%_1px] bg-center bg-no-repeat [&::-webkit-slider-thumb]:h-[11px] [&::-webkit-slider-thumb]:w-[4px] [&::-webkit-slider-thumb]:appearance-none [&::-webkit-slider-thumb]:bg-[#666]"
          />
        </div>
        <button aria-label="Zoom in" className="ml-[4px]"><Art view="0 0 8 8" w={8} h={8}><path d="M0 4H8M4 0V8" stroke="#555" strokeWidth="2" /></Art></button>
        <button className="w-[50px] text-center">50%</button>
        <button aria-label="Fit page to current window" className="mr-[15px]">
          <Art view="0 0 13 13" w={13} h={13}>
            <path d="M.5 .5H12.500V12.500H.5Z" stroke="#777" />
            <path d="M6.500 1.500V5M6.500 8V11.500M1.500 6.500H5M8 6.500H11.500M5.500 3.500H7.500M5.500 9.500H7.500M3.500 5.500V7.500M9.500 5.500V7.500" stroke="#777" />
          </Art>
        </button>
        <button aria-label="Switch windows" className="mr-[21px]">
          <Art view="0 0 14 13" w={14} h={13}>
            <path d="M.5 4.500V1H5.500V4.500M8.500 4V1H13.500V4.500M5.500 6.500H12V10.500H5.500ZM.5 7V12H5" stroke="#777" />
            <path d="M0 1H6M8 1H14M5 6H12.500M0 7.500H4" stroke="#777" strokeWidth="2" />
          </Art>
        </button>
      </div>
    </footer>
  );
}

export default function App() {
  return (
    <div className="h-screen bg-white p-2 font-['Open_Sans','Noto_Sans',sans-serif] text-[11px] leading-[16px]">
      <div className="flex h-full flex-col bg-[#3955a3] shadow-[1px_1px_6px_rgba(0,0,0,0.6)]">
        <TitleBar />
        <Tabs />
        <div className="mx-px mb-px flex min-h-0 flex-1 flex-col bg-[#ebebeb]">
          <Ribbon />
          <div className="flex min-h-0 flex-1">
            <ShapesPane />
            <DrawingArea />
          </div>
          <StatusBar />
        </div>
      </div>
    </div>
  );
}
